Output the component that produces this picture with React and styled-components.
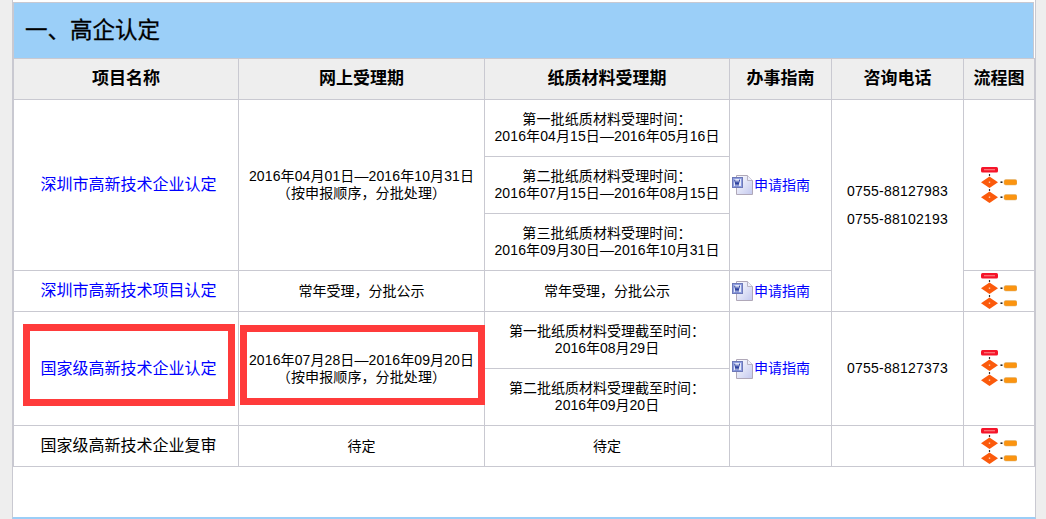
import React from 'react';
import styled, { createGlobalStyle } from 'styled-components';

const GlobalStyle = createGlobalStyle`
  html, body {
    margin: 0;
    padding: 0;
    height: 519px;
    overflow: hidden;
    background: #eeeeee;
  }
  body {
    font-family: "Liberation Sans", "Noto Sans CJK SC", sans-serif;
    font-size: 14px;
    color: #000;
  }
`;

const Page = styled.div`
  position: relative;
  height: 519px;
`;

const Panel = styled.div`
  box-sizing: border-box;
  width: 1024px;
  height: 519px;
  margin-left: 12px;
  padding-top: 2px;
  background: #fff;
  border-left: 1px solid #c9c9d1;
  border-right: 1px solid #c9c9d1;
  border-bottom: 2px solid #9ccef7;
`;

const Title = styled.h2`
  box-sizing: border-box;
  height: 56px;
  width: 1021px;
  margin: 0;
  padding: 0 0 0 11px;
  border-top: 1px solid #c9c9d1;
  border-left: 1px solid #c9c9d1;
  border-right: 1px solid #c9c9d1;
  background: #9bcff8;
  font-size: 22.5px;
  font-weight: 400;
  line-height: 56px;
  -webkit-text-stroke: 0.3px #000;
`;

const Table = styled.table`
  table-layout: fixed;
  width: 1021px;
  border-collapse: collapse;
  text-align: center;

  td, th {
    box-sizing: border-box;
    padding: 0;
    border: 1px solid #c9c9d1;
  }
`;

const Head = styled.th`
  height: 41px;
  padding-bottom: 6px !important;
  background: #eeeeee;
  font-size: 17px;
  font-weight: 700;
`;

const Cell = styled.td`
  height: ${({ $h }) => $h || 41}px;
  line-height: 17px;
  letter-spacing: ${({ $dates }) => ($dates ? '0.11px' : '0')};
`;

const NameCell = styled(Cell)`
  padding-left: 5px !important;
`;

const NameText = styled.span`
  font-size: 16px;
  color: ${({ $link }) => ($link ? '#0000ff' : '#000')};
`;

const GuideLink = styled.a`
  display: flex;
  align-items: center;
  padding-left: 2px;
  color: #0000ff;
  text-decoration: none;
`;

const PhoneCell = styled(Cell)`
  padding-bottom: 2px !important;
`;

const PhoneLine = styled.div`
  line-height: 28px;
  letter-spacing: 0.22px;
`;

const FlowWrap = styled.div`
  display: flex;
  justify-content: center;
`;

const Mark = styled.div`
  position: absolute;
  box-sizing: border-box;
  left: ${({ $x }) => $x}px;
  top: ${({ $y }) => $y}px;
  width: ${({ $w }) => $w}px;
  height: ${({ $h }) => $h}px;
  border: 7px solid #ff3b3b;
`;

const WordIcon = () => (
  <svg width="22" height="22" viewBox="0 0 22 22">
    <defs>
      <linearGradient id="wordPage" x1="0" y1="0" x2="1" y2="1">
        <stop offset="0" stopColor="#ffffff" />
        <stop offset="1" stopColor="#c3c8ee" />
      </linearGradient>
    </defs>
    <path d="M4.5 1.5h11l5 5v14h-16z" fill="url(#wordPage)" stroke="#b0a8b8" />
    <path d="M15.5 1.5v5h5" fill="#eef0fb" stroke="#b8b4c4" />
    <rect x="0.5" y="3.5" width="10" height="10" fill="#8f9fe0" stroke="#6d78b8" />
    <rect x="2" y="5" width="7" height="7" fill="#e6eafa" />
    <path d="M2.6 5.6l1.4 5.4 1-3.4 1 3.4 1.6-5.4" fill="none" stroke="#2b3f9e" strokeWidth="1.1" />
  </svg>
);

const FlowIcon = () => (
  <svg width="36" height="37" viewBox="0 0 36 37">
    <rect x="0" y="0" width="17" height="5.5" rx="1.5" fill="#f5142a" />
    <rect x="3" y="2.4" width="11" height="0.8" fill="#ffb0a8" />
    <path d="M8.5 7v2M8.5 22v2" stroke="#333" strokeWidth="1.2" />
    <path d="M8.5 9.5l8.5 5.7-8.5 5.8-8.5-5.8z" fill="#fb5a0c" />
    <path d="M8.5 24.5l8.5 5.7-8.5 5.8-8.5-5.8z" fill="#fb5a0c" />
    <rect x="7.8" y="14.5" width="1.4" height="1.4" fill="#ffd0b0" />
    <rect x="7.8" y="29.5" width="1.4" height="1.4" fill="#ffd0b0" />
    <rect x="19.5" y="14.4" width="2" height="1.6" fill="#222" />
    <rect x="19.5" y="29.4" width="2" height="1.6" fill="#222" />
    <rect x="23" y="12.5" width="13" height="5.5" rx="1.8" fill="#fb9410" stroke="#d8b070" strokeWidth="0.5" />
    <rect x="23" y="27.5" width="13" height="5.5" rx="1.8" fill="#fb9410" stroke="#d8b070" strokeWidth="0.5" />
  </svg>
);

const Guide = () => (
  <GuideLink href="#guide">
    <WordIcon />
    申请指南
  </GuideLink>
);

const Flow = () => (
  <FlowWrap>
    <FlowIcon />
  </FlowWrap>
);

const Lines = ({ children }) =>
  children.map((line) => <div key={line}>{line}</div>);

const columns = [
  ['项目名称', 225],
  ['网上受理期', 246],
  ['纸质材料受理期', 245],
  ['办事指南', 102],
  ['咨询电话', 132],
  ['流程图', 71]
];

const App = () => (
  <Page>
    <GlobalStyle />
    <Panel>
      <Title>一、高企认定</Title>
      <Table>
        <colgroup>
          {columns.map(([label, width]) => (
            <col key={label} width={width} />
          ))}
        </colgroup>
        <thead>
          <tr>
            {columns.map(([label]) => (
              <Head key={label}>{label}</Head>
            ))}
          </tr>
        </thead>
        <tbody>
          <tr>
            <NameCell rowSpan={3}>
              <NameText $link>深圳市高新技术企业认定</NameText>
            </NameCell>
            <Cell rowSpan={3} $dates>
              <Lines>{['2016年04月01日—2016年10月31日', '（按申报顺序，分批处理）']}</Lines>
            </Cell>
            <Cell $h={57} $dates>
              <Lines>{['第一批纸质材料受理时间：', '2016年04月15日—2016年05月16日']}</Lines>
            </Cell>
            <Cell rowSpan={3}>
              <Guide />
            </Cell>
            <PhoneCell rowSpan={4}>
              <PhoneLine>0755-88127983</PhoneLine>
              <PhoneLine>0755-88102193</PhoneLine>
            </PhoneCell>
            <Cell rowSpan={3}>
              <Flow />
            </Cell>
          </tr>
          <tr>
            <Cell $h={57} $dates>
              <Lines>{['第二批纸质材料受理时间：', '2016年07月15日—2016年08月15日']}</Lines>
            </Cell>
          </tr>
          <tr>
            <Cell $h={57} $dates>
              <Lines>{['第三批纸质材料受理时间：', '2016年09月30日—2016年10月31日']}</Lines>
            </Cell>
          </tr>
          <tr>
            <NameCell>
              <NameText $link>深圳市高新技术项目认定</NameText>
            </NameCell>
            <Cell>常年受理，分批公示</Cell>
            <Cell>常年受理，分批公示</Cell>
            <Cell>
              <Guide />
            </Cell>
            <Cell>
              <Flow />
            </Cell>
          </tr>
          <tr>
            <NameCell rowSpan={2}>
              <NameText $link>国家级高新技术企业认定</NameText>
            </NameCell>
            <Cell rowSpan={2} $dates>
              <Lines>{['2016年07月28日—2016年09月20日', '（按申报顺序，分批处理）']}</Lines>
            </Cell>
            <Cell $h={57}>
              <Lines>{['第一批纸质材料受理截至时间：', '2016年08月29日']}</Lines>
            </Cell>
            <Cell rowSpan={2}>
              <Guide />
            </Cell>
            <PhoneCell rowSpan={2}>
              <PhoneLine>0755-88127373</PhoneLine>
            </PhoneCell>
            <Cell rowSpan={2}>
              <Flow />
            </Cell>
          </tr>
          <tr>
            <Cell $h={57}>
              <Lines>{['第二批纸质材料受理截至时间：', '2016年09月20日']}</Lines>
            </Cell>
          </tr>
          <tr>
            <NameCell>
              <NameText>国家级高新技术企业复审</NameText>
            </NameCell>
            <Cell>待定</Cell>
            <Cell>待定</Cell>
            <Cell />
            <Cell />
            <Cell>
              <Flow />
            </Cell>
          </tr>
        </tbody>
      </Table>
    </Panel>
    <Mark $x={23} $y={324} $w={212} $h={82} />
    <Mark $x={240} $y={325} $w={245} $h={80} />
  </Page>
);

export default App;
